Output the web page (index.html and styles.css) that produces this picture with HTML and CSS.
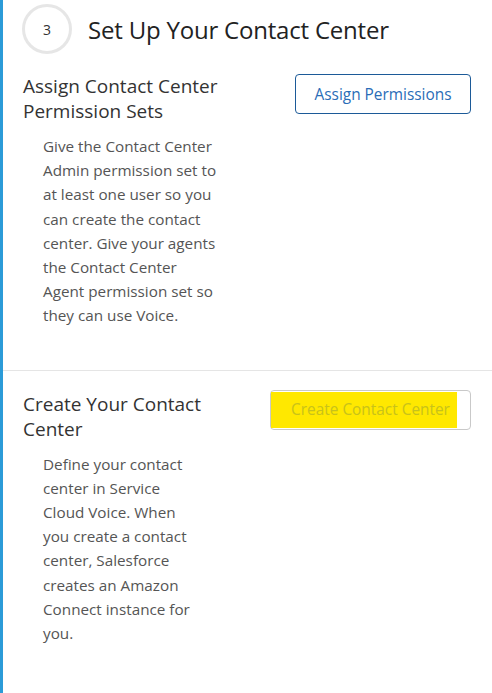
FILE: index.html
```html
<!DOCTYPE html>
<html lang="en">
<head>
<meta charset="utf-8">
<title>Set Up Your Contact Center</title>
<link rel="stylesheet" href="styles.css">
</head>
<body>
<div class="panel">
  <header class="step-header">
    <div class="step-num">3</div>
    <h1 class="step-title">Set Up Your Contact Center</h1>
  </header>

  <section class="task task-first">
    <div class="task-info">
      <h2 class="task-title">Assign Contact Center Permission Sets</h2>
      <p class="task-desc">Give the Contact Center Admin permission set to at least one user so you can create the contact center. Give your agents the Contact Center Agent permission set so they can use Voice.</p>
    </div>
    <button class="btn btn-primary" type="button">Assign Permissions</button>
  </section>

  <section class="task task-second">
    <div class="task-info">
      <h2 class="task-title">Create Your Contact Center</h2>
      <p class="task-desc">Define your contact center in Service Cloud Voice. When you create a contact center, Salesforce creates an Amazon Connect instance for you.</p>
    </div>
    <button class="btn btn-disabled" type="button" disabled><span class="highlight"></span><span class="btn-label">Create Contact Center</span></button>
  </section>
</div>
</body>
</html>
```

FILE: styles.css
```css
html, body {
  margin: 0;
  padding: 0;
  background: #ffffff;
}

body {
  font-family: "Open Sans", "Noto Sans", "Liberation Sans", sans-serif;
  color: #333333;
}

.panel {
  box-sizing: border-box;
  min-height: 693px;
  border-left: 3px solid #2b9bd8;
  background: #ffffff;
}

.step-header {
  display: flex;
  align-items: center;
  gap: 16px;
  padding: 4px 0 0 19px;
  height: 50px;
}

.step-num {
  box-sizing: border-box;
  width: 50px;
  height: 50px;
  border: 3px solid #e6e6e6;
  border-radius: 50%;
  display: flex;
  align-items: center;
  justify-content: center;
  font-size: 14px;
  color: #333333;
}

.step-title {
  margin: 0;
  font-size: 24px;
  font-weight: 400;
  color: #222222;
  letter-spacing: -0.2px;
}

.task {
  display: flex;
  align-items: flex-start;
  padding: 0 21px 0 20px;
}

.task-first {
  padding-top: 20px;
  padding-bottom: 42px;
  border-bottom: 1px solid #e5e5e5;
}

.task-second {
  padding-top: 21px;
}

.task-info {
  flex: 1;
  margin-right: 20px;
}

.task-title {
  margin: 0;
  font-size: 19px;
  line-height: 25px;
  font-weight: 400;
  color: #333333;
}

.task-desc {
  margin: 10px 55px 0 20px;
  font-size: 15.25px;
  line-height: 24.2px;
  color: #555555;
}

.btn {
  position: relative;
  box-sizing: border-box;
  height: 40px;
  border-radius: 4px;
  background: #ffffff;
  font-family: inherit;
  font-size: 15.4px;
  padding: 0 10px;
  flex: none;
  white-space: nowrap;
}

.btn-primary {
  width: 176px;
  border: 1px solid #1c5a98;
  color: #2a6db7;
}

.btn-disabled {
  width: 201px;
  margin-top: -2px;
  border: 1px solid #c9c9c9;
  color: #c8c21a;
}

.highlight {
  position: absolute;
  left: 0;
  top: 1px;
  width: 186px;
  height: 36px;
  background: #ffe800;
}

.btn-label {
  position: relative;
}
```
